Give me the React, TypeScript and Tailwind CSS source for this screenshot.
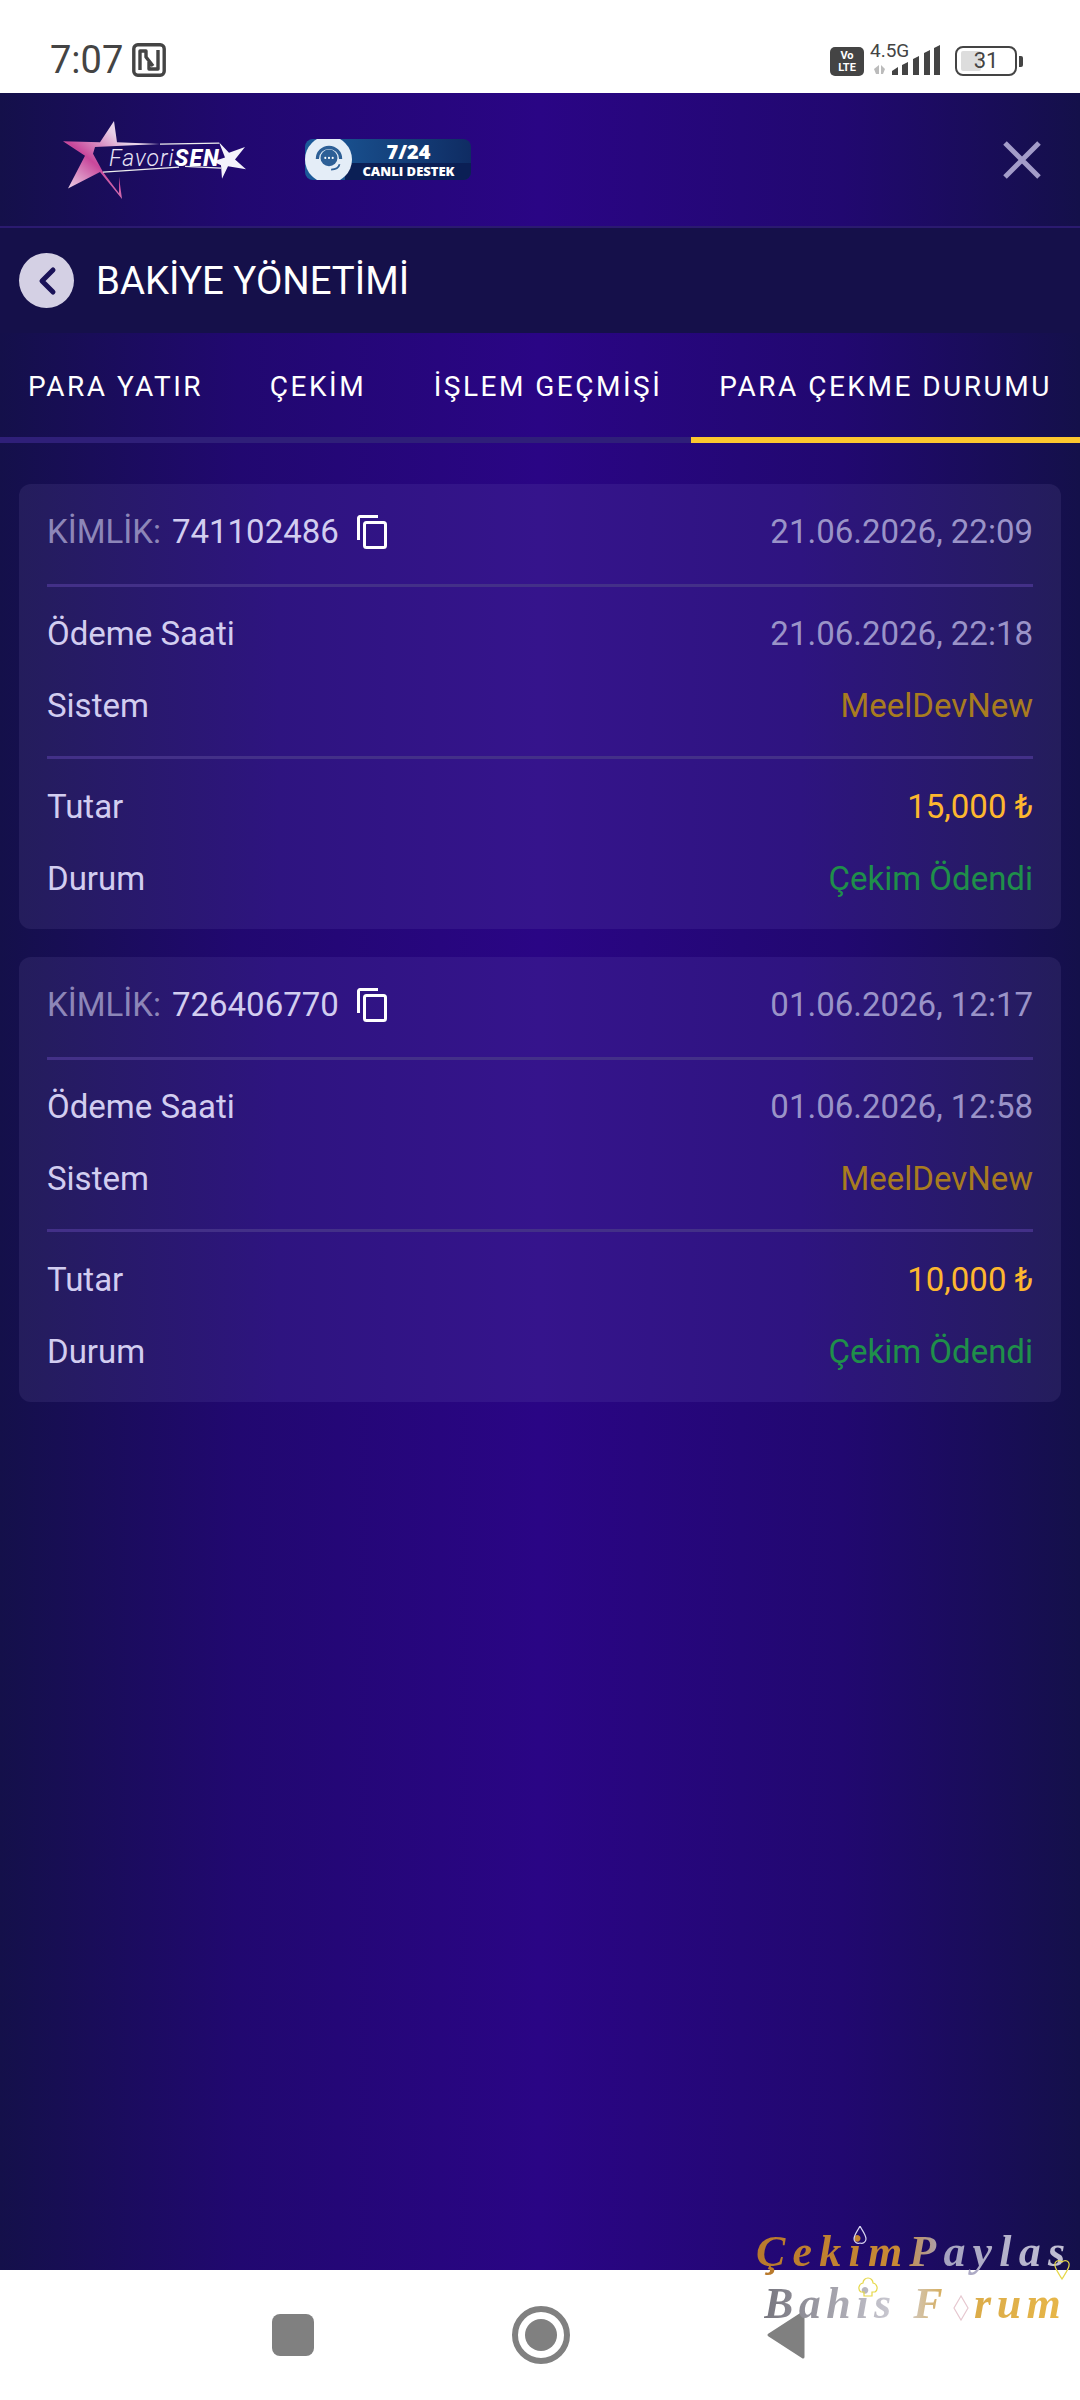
const TABS = [
  { label: "PARA YATIR", width: "w-[231px]" },
  { label: "ÇEKİM", width: "w-[174px]" },
  { label: "İŞLEM GEÇMİŞİ", width: "w-[286px]" },
  { label: "PARA ÇEKME DURUMU", width: "w-[389px]", active: true },
]

const RECORDS = [
  { id: "741102486", created: "21.06.2026, 22:09", paid: "21.06.2026, 22:18", amount: "15,000 ₺" },
  { id: "726406770", created: "01.06.2026, 12:17", paid: "01.06.2026, 12:58", amount: "10,000 ₺" },
]

function NfcIcon() {
  return (
    <svg width="34" height="34" viewBox="0 0 34 34" fill="none" stroke="#444" strokeWidth="3.4">
      <rect x="1.8" y="1.8" width="30.4" height="30.4" rx="4" />
      <path d="M8 27V8h6v6l7 9M26 7v19h-9v-7" strokeLinejoin="round" />
    </svg>
  )
}

function StatusBar() {
  return (
    <div className="flex h-[93px] items-end justify-between bg-white pb-[17px] pl-[50px] pr-[57px]">
      <div className="mb-[-3px] flex items-center gap-[9px] text-[38px] leading-[38px] text-[#444]">
        <span>7:07</span>
        <NfcIcon />
      </div>
      <div className="flex items-end">
        <div className="flex h-[29px] w-[34px] flex-col items-center justify-center rounded-[5px] bg-[#444] text-[11px] font-bold leading-[12px] text-white">
          <span>Vo</span>
          <span>LTE</span>
        </div>
        <div className="relative ml-[6px] h-[32px] w-[70px]">
          <span className="absolute left-0 top-[-3px] text-[19px] leading-[20px] text-[#444]">4.5G</span>
          <svg className="absolute left-0 top-0" width="70" height="32" viewBox="0 0 70 32">
            <path d="M4 25l5-4v9H6zM11 21l4 4-2 5h-2z" fill="#bbb" />
            <path d="M22 31v-4l6-4v8zM32 31v-10l6-3v13zM43 31V15l6-3v19zM54 31V9l6-3v25zM64 31V4l6-3v30z" fill="#444" />
          </svg>
        </div>
        <div className="ml-[15px] flex items-center">
          <div className="relative flex h-[30px] w-[62px] items-center justify-center rounded-[8px] border-[2.5px] border-[#444]">
            <div className="absolute bottom-[3px] left-[4px] top-[3px] w-[20px] rounded-[2px] bg-[#ddd]" />
            <span className="relative text-[22px] leading-[22px] text-[#444]">31</span>
          </div>
          <div className="ml-[2px] h-[11px] w-[4px] rounded-r-[2px] bg-[#444]" />
        </div>
      </div>
    </div>
  )
}

function Logo() {
  return (
    <div className="relative h-[78px] w-[183px]">
      <svg className="absolute left-0 top-0" width="183" height="78" viewBox="0 0 183 81" preserveAspectRatio="none" fill="none">
        <defs>
          <linearGradient id="logoStar" x1="0.9" y1="0" x2="0" y2="0.9">
            <stop offset="0" stopColor="#f6f2f8" />
            <stop offset="0.3" stopColor="#e8cfe6" />
            <stop offset="0.62" stopColor="#c8479b" />
            <stop offset="1" stopColor="#f0e4f0" />
          </linearGradient>
        </defs>
        <path d="M0 21L37 22L51 0L54 22L97 24L32 27L30 34L40 53L56 75L56 58L59 81L37 53L5 70L22 36Z" fill="url(#logoStar)" />
        <path d="M97 24l59 -1M40 53l76-5M122 47l36 2" stroke="#eee" strokeWidth="1.3" />
        <path d="M156 22L166 33L182 27L172 40L183 50L165 47L159 60L158 46L150 42L162 38Z" fill="#f4f2fb" />
      </svg>
      <span className="absolute left-[46px] top-[24px] whitespace-nowrap text-[23px] font-light italic leading-[28px] tracking-[1px] text-[#e9e4f6]">
        Favori<b className="font-extrabold text-white">SEN</b>
      </span>
    </div>
  )
}

function SupportBadge() {
  return (
    <div className="relative flex h-[41px] w-[166px] items-center overflow-hidden rounded-[8px] bg-[linear-gradient(90deg,#1b5a9a,#0f2c63)]">
      <div className="absolute bottom-0 left-[40px] right-0 h-[17px] bg-[#0b1f55]" />
      <div className="relative flex h-[47px] w-[47px] shrink-0 items-center justify-center rounded-full bg-[#e4edf7]">
        <svg width="36" height="34" viewBox="0 0 34 32" fill="none">
          <path d="M6 15a11 11 0 0122 0" stroke="#2d5f96" strokeWidth="3" />
          <circle cx="17" cy="14" r="8" fill="#2d5f96" />
          <circle cx="13.5" cy="14" r="1" fill="#fff" />
          <circle cx="17" cy="14" r="1" fill="#fff" />
          <circle cx="20.5" cy="14" r="1" fill="#fff" />
          <path d="M27 20c-1 4-4 5-8 5" stroke="#2d5f96" strokeWidth="1.6" />
        </svg>
      </div>
      <div className="relative flex-1 pr-[6px] text-center font-['Open_Sans',sans-serif] font-extrabold text-white">
        <div className="text-[20px] leading-[23px]">7/24</div>
        <div className="whitespace-nowrap text-[13px] leading-[17px]">CANLI DESTEK</div>
      </div>
    </div>
  )
}

function Header() {
  return (
    <div className="flex h-[135px] items-center justify-between border-b-2 border-[#2b1a70] bg-[linear-gradient(90deg,#14104a,#210870_22%,#2a0585_50%,#210870_78%,#14104a)] pl-[63px] pr-[38px]">
      <div className="flex items-center gap-[59px]">
        <Logo />
        <SupportBadge />
      </div>
      <svg width="40" height="40" viewBox="0 0 40 40" stroke="#a39cc9" strokeWidth="5">
        <path d="M3 3l34 34M37 3L3 37" />
      </svg>
    </div>
  )
}

function TitleBar() {
  return (
    <div className="flex h-[105px] items-center gap-[22px] bg-[#15104a] pl-[19px]">
      <div className="flex h-[55px] w-[55px] items-center justify-center rounded-full bg-[#d4d0e4]">
        <svg width="20" height="30" viewBox="0 0 20 30" fill="none" stroke="#1a1258" strokeWidth="5" strokeLinecap="round" strokeLinejoin="round">
          <path d="M16 4L5 15l11 11" />
        </svg>
      </div>
      <span className="text-[38.4px] leading-[44px] text-white">BAKİYE YÖNETİMİ</span>
    </div>
  )
}

function Tabs() {
  return (
    <div className="flex h-[110px] border-b-[6px] border-[#2f1f79] pt-[3px]">
      {TABS.map((tab) => (
        <div key={tab.label} className={`relative flex items-center justify-center ${tab.width}`}>
          <span className="whitespace-nowrap text-[28px] tracking-[2.5px] text-white">{tab.label}</span>
          {tab.active && <div className="absolute bottom-[-6px] left-0 right-0 h-[6px] bg-[#fdc72f]" />}
        </div>
      ))}
    </div>
  )
}

function CopyIcon() {
  return (
    <svg width="30" height="34" viewBox="0 0 30 34" fill="none" stroke="#fff" strokeWidth="3">
      <path d="M1.5 25V3a1.5 1.5 0 011.5-1.5h18" />
      <rect x="7.5" y="7.5" width="21" height="25" rx="2" />
    </svg>
  )
}

function Row({ label, value, valueClass }: { label: string; value: string; valueClass: string }) {
  return (
    <div className="flex h-[72px] items-center justify-between">
      <span className="text-[#d2cdf0]">{label}</span>
      <span className={valueClass}>{value}</span>
    </div>
  )
}

function RecordCard({ id, created, paid, amount }: { id: string; created: string; paid: string; amount: string }) {
  return (
    <div className="rounded-[12px] bg-[linear-gradient(90deg,#241d5c,#2e1480_25%,#35148c_50%,#2e1480_75%,#241d5c)] px-[28px] text-[33px] leading-[40px]">
      <div className="flex h-[103px] items-center justify-between border-b-[3px] border-[#433088] pb-[4px]">
        <div className="flex items-center">
          <span className="text-[#8d86b8]">KİMLİK:</span>
          <span className="ml-[11px] text-[#d2cdf0]">{id}</span>
          <span className="ml-[18px] flex">
            <CopyIcon />
          </span>
        </div>
        <span className="text-[#9a93c8]">{created}</span>
      </div>
      <div className="border-b-[3px] border-[#433088] pb-[14px] pt-[11px]">
        <Row label="Ödeme Saati" value={paid} valueClass="text-[#9a93c8]" />
        <Row label="Sistem" value="MeelDevNew" valueClass="text-[#a87c20]" />
      </div>
      <div className="pb-[14px] pt-[12px]">
        <Row label="Tutar" value={amount} valueClass="text-[#fdb72f]" />
        <Row label="Durum" value="Çekim Ödendi" valueClass="text-[#1f8f4a]" />
      </div>
    </div>
  )
}

function NavBar() {
  return (
    <div className="flex h-[130px] items-center bg-white">
      <div className="ml-[272px] h-[42px] w-[42px] rounded-[8px] bg-[#808080]" />
      <div className="ml-[198px] flex h-[58px] w-[58px] items-center justify-center rounded-full border-[6px] border-[#808080]">
        <div className="h-[32px] w-[32px] rounded-full bg-[#808080]" />
      </div>
      <svg className="ml-[197px]" width="38" height="48" viewBox="0 0 38 48">
        <path d="M36 2v44L2 24z" fill="#808080" stroke="#808080" strokeWidth="3" strokeLinejoin="round" />
      </svg>
    </div>
  )
}

function Watermark() {
  return (
    <div className="absolute left-[756px] top-[2226px] font-['Liberation_Serif',serif] text-[44px] font-bold italic leading-[52px]">
      <div className="whitespace-nowrap bg-[linear-gradient(90deg,#b8792c_0%,#c98a35_45%,#a6a3c0_60%,#c4c2d6_100%)] bg-clip-text tracking-[7.2px] text-transparent">
        ÇekimPaylas
      </div>
      <div className="ml-[8px] whitespace-nowrap bg-[linear-gradient(90deg,#77767f_0%,#d0cfd8_45%,#d8a94a_60%,#e8b748_100%)] bg-clip-text tracking-[5.5px] text-transparent">
        Bahis F<span className="mx-[5px] inline-block w-[16px]" />rum
      </div>
      {/* ornaments sitting over the watermark letters */}
      <svg className="absolute left-0 top-0" width="324" height="110" viewBox="0 0 324 110" fill="none" strokeWidth="1.2">
        <path d="M104 0c-3 6-6 9-6 13 0 3 3 5 6 4 3 1 6-1 6-4 0-4-3-7-6-13z" stroke="#d8d4f0" />
        <path d="M306 36c-3-3-8-1-7 4 1 4 4 8 7 13 3-5 6-9 7-13 1-5-4-7-7-4z" stroke="#e6d84a" />
        <path d="M112 52a5 5 0 015 5 5 5 0 012 9h-3v4h-8v-4h-3a5 5 0 012-9 5 5 0 015-5z" stroke="#e6d84a" />
        <path d="M205 70l-7 12 7 12 7-12z" stroke="#e6c8d0" />
      </svg>
    </div>
  )
}

export default function App() {
  return (
    <div className="relative flex h-[2400px] w-[1080px] flex-col overflow-hidden bg-white font-['Roboto',sans-serif]">
      <StatusBar />
      <Header />
      <div className="flex flex-1 flex-col bg-[linear-gradient(90deg,#14104a,#210870_22%,#2a0585_50%,#210870_78%,#14104a)]">
        <TitleBar />
        <Tabs />
        <div className="flex flex-col gap-[28px] px-[19px] pt-[41px]">
          {RECORDS.map((r) => (
            <RecordCard key={r.id} {...r} />
          ))}
        </div>
      </div>
      <NavBar />
      <Watermark />
    </div>
  )
}
